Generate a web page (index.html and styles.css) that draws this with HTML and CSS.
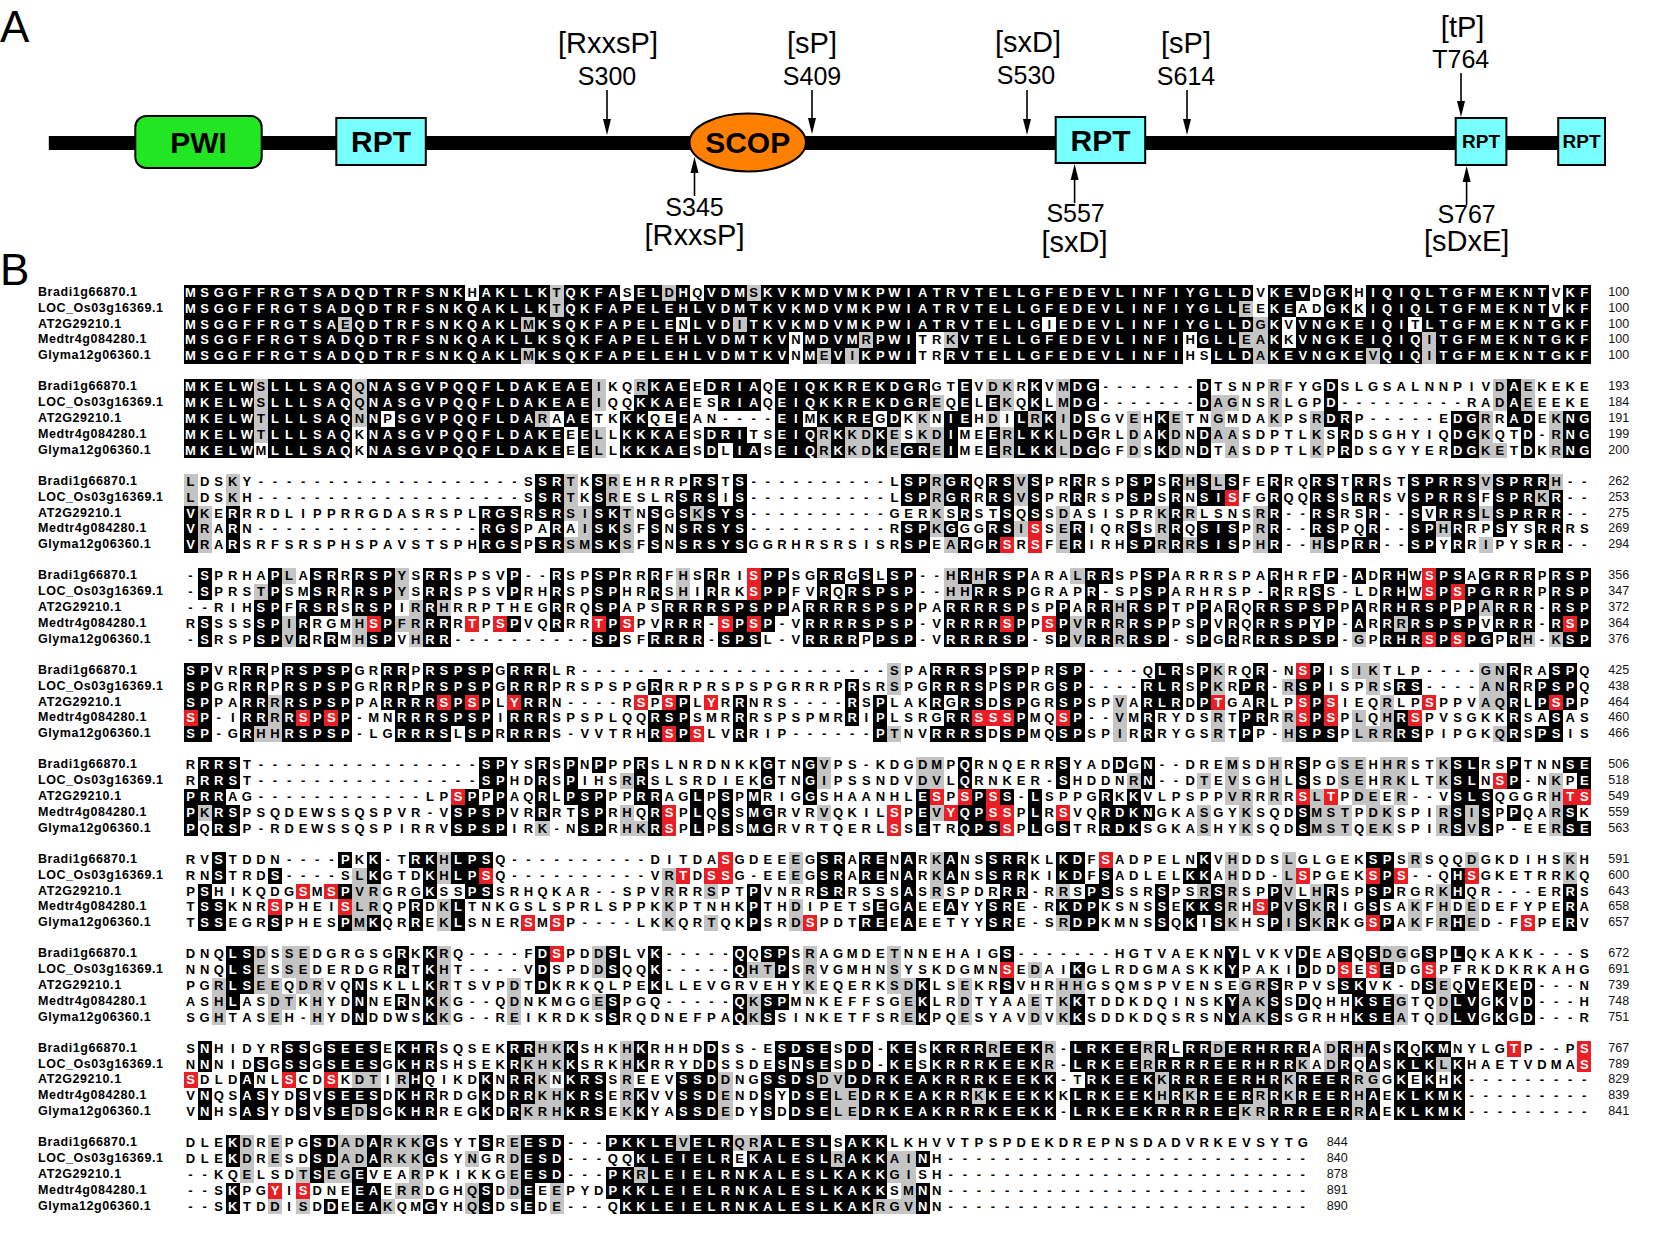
FILE: index.html
```html
<!DOCTYPE html>
<html lang="en">
<head>
<meta charset="utf-8">
<title>Protein domain diagram and alignment</title>
<link rel="stylesheet" href="styles.css">
</head>
<body>
<div class="page">
  <svg class="diagram" width="1654" height="248" viewBox="0 0 1654 248">
    <text class="plabel" x="0" y="42">A</text>
    <rect class="bar" x="48.8" y="136" width="1556" height="14"/>
    <rect class="pwi" x="135.3" y="116" width="126.4" height="52" rx="11"/>
    <text class="dom" x="198.5" y="153">PWI</text>
    <rect class="rpt" x="336.3" y="118" width="89.5" height="47"/>
    <text class="dom" x="381.1" y="152">RPT</text>
    <ellipse class="scop" cx="747.7" cy="142.5" rx="58.2" ry="29"/>
    <text class="dom" x="747.7" y="153">SCOP</text>
    <rect class="rpt" x="1055.7" y="117" width="89.5" height="46"/>
    <text class="dom" x="1100.5" y="151">RPT</text>
    <rect class="rpt" x="1455.7" y="118" width="50.7" height="47"/>
    <text class="dom-s" x="1481.1" y="148">RPT</text>
    <rect class="rpt" x="1558.2" y="118" width="46.8" height="47"/>
    <text class="dom-s" x="1581.6" y="148">RPT</text>

    <line class="arrow" x1="607" y1="90" x2="607" y2="122"/>
    <polygon class="head" points="603,119 611,119 607,135"/>
    <line class="arrow" x1="812" y1="90" x2="812" y2="121"/>
    <polygon class="head" points="808,118 816,118 812,134"/>
    <line class="arrow" x1="1027" y1="90" x2="1027" y2="122"/>
    <polygon class="head" points="1023,119 1031,119 1027,135"/>
    <line class="arrow" x1="1187" y1="90" x2="1187" y2="122"/>
    <polygon class="head" points="1183,119 1191,119 1187,135"/>
    <line class="arrow" x1="1461" y1="73" x2="1461" y2="104"/>
    <polygon class="head" points="1457,101 1465,101 1461,117"/>

    <line class="arrow" x1="694.5" y1="170" x2="694.5" y2="196"/>
    <polygon class="head" points="690.5,173 698.5,173 694.5,157"/>
    <line class="arrow" x1="1074.6" y1="177" x2="1074.6" y2="203"/>
    <polygon class="head" points="1070.6,180 1078.6,180 1074.6,164"/>
    <line class="arrow" x1="1466.6" y1="179" x2="1466.6" y2="205"/>
    <polygon class="head" points="1462.6,182 1470.6,182 1466.6,166"/>

    <text class="motif" x="608" y="53">[RxxsP]</text>
    <text class="site" x="607" y="85">S300</text>
    <text class="motif" x="812" y="53">[sP]</text>
    <text class="site" x="812" y="85">S409</text>
    <text class="motif" x="1028" y="52">[sxD]</text>
    <text class="site" x="1026" y="84">S530</text>
    <text class="motif" x="1186" y="53">[sP]</text>
    <text class="site" x="1186" y="85">S614</text>
    <text class="motif" x="1462.6" y="37">[tP]</text>
    <text class="site" x="1460.7" y="68">T764</text>

    <text class="site" x="694.5" y="216">S345</text>
    <text class="motif" x="694.5" y="245">[RxxsP]</text>
    <text class="site" x="1075.6" y="222">S557</text>
    <text class="motif" x="1074.6" y="252">[sxD]</text>
    <text class="site" x="1466.6" y="223">S767</text>
    <text class="motif" x="1466.6" y="251">[sDxE]</text>
  </svg>

  <section class="panel-b">
    <div class="label-b">B</div>
    <div class="alignment" id="alignment"></div>
  </section>
</div>
<script src="script.js"></script>
</body>
</html>
```

FILE: styles.css
```css
html, body {
  margin: 0;
  padding: 0;
  background: #ffffff;
}
body {
  font-family: "Liberation Sans", Arial, sans-serif;
  color: #000;
}
.page {
  width: 1654px;
  height: 1243px;
  overflow: hidden;
  position: relative;
}
.diagram {
  display: block;
  overflow: visible;
}
.plabel {
  font-family: "Liberation Sans", Arial, sans-serif;
  font-size: 44px;
  fill: #000;
}
.bar {
  fill: #000;
}
.pwi {
  fill: #22e622;
  stroke: #000;
  stroke-width: 2;
}
.rpt {
  fill: #78ffff;
  stroke: #000;
  stroke-width: 2;
}
.scop {
  fill: #ff8000;
  stroke: #000;
  stroke-width: 2;
}
.dom {
  font-family: "Liberation Sans", Arial, sans-serif;
  font-weight: bold;
  font-size: 30px;
  text-anchor: middle;
  fill: #000;
}
.dom-s {
  font-family: "Liberation Sans", Arial, sans-serif;
  font-weight: bold;
  font-size: 19px;
  text-anchor: middle;
  fill: #000;
}
.arrow {
  stroke: #000;
  stroke-width: 1.6;
}
.head {
  fill: #000;
}
.motif {
  font-family: "Liberation Sans", Arial, sans-serif;
  font-size: 29px;
  text-anchor: middle;
  fill: #000;
}
.site {
  font-family: "Liberation Sans", Arial, sans-serif;
  font-size: 25px;
  text-anchor: middle;
  fill: #000;
}

.panel-b {
  display: block;
}
.label-b {
  height: 37px;
  font-size: 44px;
  line-height: 44px;
}
.alignment {
  padding-left: 38px;
}
.block {
  margin-bottom: 15.5px;
}
.row {
  display: flex;
  height: 15.8px;
}
.name {
  width: 145.5px;
  flex: none;
  font-weight: bold;
  font-size: 12.5px;
  letter-spacing: 0.55px;
  line-height: 15.8px;
  white-space: nowrap;
}
.seq {
  display: flex;
  flex: none;
}
.c {
  width: 14.08px;
  flex: none;
  text-align: center;
  font-weight: bold;
  font-size: 13px;
  line-height: 15.8px;
}
.c.b {
  background: #000;
  color: #fff;
}
.c.g {
  background: #c4c4c4;
  color: #000;
}
.c.r {
  background: #ea1f25;
  color: #fff;
}
.num {
  margin-left: 17px;
  font-size: 12.5px;
  line-height: 15.8px;
  color: #111;
}
```

FILE: script.js
```js
(function () {
  var names = ['Bradi1g66870.1', 'LOC_Os03g16369.1', 'AT2G29210.1', 'Medtr4g084280.1', 'Glyma12g06360.1'];
  function d(n) { return new Array(n + 1).join('-'); }
  var blocks = [
    { end: [100, 100, 100, 100, 100], seq: [
      'MSGGFFRGTSADQDTRFSNKHAKLLKTQKFASELDHQVDMSKVKMDVMKPWIATRVTELLGFEDEVLINFIYGLLDVKEVDGKHIQIQLTGFMEKNTVKF',
      'MSGGFFRGTSADQDTRFSNKQAKLLKTQKFAPELEHLVDMTKVKMDVMKPWIATRVTELLGFEDEVLINFIYGLLEEKEADGKKIQIQLTGFMEKNTVKF',
      'MSGGFFRGTSAEQDTRFSNKQAKLMKSQKFAPELENLVDITKVKMDVMKPWIATRVTELLGIEDEVLINFIYGLLDGKVVNGKEIQITLTGFMEKNTGKF',
      'MSGGFFRGTSADQDTRFSNKQAKLLKSQKFAPELEHLVDMTKVNMDVMRPWITRKVTELLGFEDEVLINFIHGLLEAKKVNGKEIQIQITGFMEKNTGKF',
      'MSGGFFRGTSADQDTRFSNKQAKLMKSQKFAPELEHLVDMTKVNMEVIKPWITRRVTELLGFEDEVLINFIHSLLDAKEVNGKEVQIQITGFMEKNTGKF'] },
    { end: [193, 184, 191, 199, 200], seq: [
      'MKELWSLLLSAQQNASGVPQQFLDAKEAEIKQRKAEEDRIAQEIQKKREKDGRGTEVDKRKVMDG-------DTSNPRFYGDSLGSALNNPIVDAEKEKE',
      'MKELWSLLLSAQQNASGVPQQFLDAKEAEIQQKKAEESRIAQEIQKKREKDGREQELEKQKLMDG-------DAGNSRLGPD---------RADAEEEKE',
      'MKELWTLLLSAQNNPSGVPQQFLDARAAETKKKQEEAN----EIMKKREGDKKNIEHDILRKIDSGVEHKETNGMDAKPSRDRP-----EDGRRADEKNG',
      'MKELWTLLLSAQKNASGVPQQFLDAKEEELLKKKAESDRITSEIQRKKDKESKDIMEERLKKLDGRLDAKDNDAASDPTLKSRDSGHYIQDGKQTD-RNG',
      'MKELWMLLLSAQKNASGVPQQFLDAKEEELLKKKAESDLIASEIQRKKDKEGREIMEERLKKLDGGFDSKDNDTASDPTLKPRDSGYYERDGKETDKRNG'] },
    { end: [262, 253, 275, 269, 294], seq: [
      'LDSKY' + d(19) + 'SSRTKSREHRRPRSTS' + d(10) + 'LSPRGRQRSVSPRRRSPSPSRHSLSFERRQRSTRRSTSPRRSVSPRRH--',
      'LDSKH' + d(19) + 'SSRTKSRESLRSRSIS' + d(10) + 'LSPRGRRRSVSPRRRSPSPSRNSIsFGRQQRSSRRSVSPRRSFSPRKR--',
      'VKERRRDLIPPRRGDASRSPLRGSRSRSISKTNSGSKSYS' + d(10) + 'GERKSRSTSQSSDASISPRKRRLSNSRR--RSRSR--SVRRSLSPRRR--',
      'VRARN' + d(16) + 'RGSPARAISKSFSNSRSYS' + d(10) + 'RSPKGGGRSIsSERIQRSSRRQSISPRR--RSPQR--SPHRRPSYSRRRS',
      'VRARSRFSRSPHSPAVSTSPHRGSPSRSMSKSFSNSRSYSGGRHRS' + 'RSISRSPEARGRsRsFERIRHSPRRRSISPHR--HSPRR--SPYRRIPYSRR--'] },
    { end: [356, 347, 372, 364, 376], seq: [
      '-SPRHAPLASRRRSPYSRRSPSVP--RSPSPRRRFHSRRIsPPSGR' + 'RGSLSP--HRHRSPARALRRSPSPARRRSPARHRFP-ADRHWsPSAGRRRPRSP',
      '-SPRSTPSMSRRRSPYSRRSPSVPRHRSPSPHRRSHIRRKsPPFVR' + 'QRSPSP--HHRRSPGRAPR-SPSPARHRSP-RRRSS-LDRHWsPsPGRRRPRSP',
      '--RIHSPFRSRSRSPIRRHRRPTHEGRRQSPAPSRRRRSPSPPARR' + 'RRSPSPPARRRRSPSPPARRHRSPTPPARQRRSPSPPARRHRSPPPARRR-RSP',
      'RSSSSSPIRRGMHsPFRRRRtPsPVQRRRtPsPVRRR-sPsP-VRR' + 'RRSPSP-VRRRRsPPsPVRRRRSPPSPVRQRRSPYP-ARRRRSPSPVRRR-RsP',
      '-SRSPSPVRRRMHSPVHRR' + d(10) + 'SPSFRRRR-SPSL-VRR' + 'RRPPSP-VRRRRSP-SPVRRRRSP-SPGRRRRSPSP-GPRHRsPsPGPRH-KSP'] },
    { end: [425, 438, 464, 460, 466], seq: [
      'SPVRRRPRSPSPGRRRPRSPSPGRRRLR' + d(22) + 'SPARRRSPSPPRSP----QLRSPKRQR-NsPISIKTLP----GNRRASPQ',
      'SPGRRRPRSPSPGRRRPRSPSPGRRRPRSPSPGRRRPRSPSPGRRR' + 'PRSRSPGRRRSPSPRGSP----RLRSPKRPR-RSPISPRSRS----ANRRPSPQ',
      'SPPARRRRSPSPPARRRRsPsPLyRRN----RsPsPLyRRNRS---' + '-RSPLAKRGRSDSPGRSPSPVARLRDPtGARLPsPsIEQRLPsPPVAQRLPsPP',
      'sP-IRRRRsPsP-MNRRRSPSPIRRRSPSPLQQRSPSMRRRSPSPM' + 'RRIPLSRGRRsssPMQsP--VMRRYDSRTPRRRsPsPLQHRsPVSGKKRSASAS',
      'SP-GRHHRSPSP-LGRRRSLSPRRRRS-VVTRHRsPsLVRRIP---' + '---PTNVRRRSDSPMQSPSPIRRRYGSRTPP-HSPSPLRRRSPIPGKQRSPSIS'] },
    { end: [506, 518, 549, 559, 563], seq: [
      'RRRST' + d(16) + 'SPYSRSPNPPPRSLNRDNKKGTNGV' + 'PS-KDGDMPQRNQERRSYADDGN--DREMSDHRSPGSEHHRSTKSLRSPTNNSE',
      'RRRST' + d(16) + 'SPHDRSPIHSRRSLSRDIEKGTNGI' + 'PSSNDVDVLQRNKER-SHDDNRN--DTEVSGHLSSDSEHRKLTKSLNsP-NKPE',
      'PRRAG' + d(12) + 'LPsPPPAQRLPSPPPRRAGLPSPMRIGGS' + 'HAANHLEsPsPsS-LSPPGRKKVLPSPPVRRRRsLtPDEER--VSLSQGGRHts',
      'PKRSPSQDEWSSQSPVR-VSPSPVRRRTSPRHQRsPLQSSMGRVRV' + 'QKILsPEVyQPssPLRsVQRDKNGKASGYKSQDSMSTPDKSPIRSISPPQARSK',
      'PQRSP-RDEWSSQSPIRRVSPSPIRK-NSPRHKRsPLPSSMGRVRT' + 'QERLsSETRQPSsPLGSTRRDKSGKASHYKSQDSMSTQEKSPIRSVSP-EERSE'] },
    { end: [591, 600, 643, 658, 657], seq: [
      'RVSTDDN----PKK-TRKHLPSQ' + d(10) + 'DITDAsGDEEEGS' + 'RARENARKANSSRRKLKDFsADPELNKVHDDSLGLGEKSPSRSQQDGKDIHSKH',
      'RNSTRDS----SLKGTDKHLPsQ' + d(10) + 'VRtDssG-EEEGS' + 'RARENARKANSSRRKIKDFSADLELKKAHDD-LsPGEKsPs--QHsGKETRRKQ',
      'PSHIKQDGsMsPVRGRGKSSPSSRHQKAR--SPVRRRSPTPVNRRS' + 'RRSSSASRSPDRRR-RRSPSSSRSPSRSRSPPVLHRSPSPRGRKHQR---ERRS',
      'TSSKNRsPHEIsLRQPRDKLTNKGSLSPRLSPPKKPTNHKPTHDIP' + 'ETSEGAEEAYYSRE-RKDPKSNSSEKKSRHsPVSKRIGSSAKFHDEDEFYPERA',
      'TSSEGRSPHESPMKQRREKLSNERsMsP----LKKQRTQKPSRDsP' + 'DTREEAEETYYSRE-SRDPKMNSSQKISKHSPISKRKGsPAKFRHED-FsPERV'] },
    { end: [672, 691, 739, 748, 751], seq: [
      'DNQLSDSSEDGRGSGRKKRQ----FDsPDDSLVK-----QQSPSRA' + 'GMDETNNEHAIGS-------HGTVAEKNYLVKVDEASQSDGGSPLQKAKK---S',
      'NNQLSESSEDERDGRRTKHT----VDSPDDSQQK-----QHTPSRV' + 'GMHNSYSKDGMNsEDAIKGLRDGMASKKYPAKIDDDsEsEDGsPFRKDKRKAHG',
      'PGRLSEEQDRVQNSKLLKRTSVPDTDKRKQLPEKLLEVGRVEHYKE' + 'QERKSDKLSEKRSVHRHHGSQMSPVENSEGRSRPVSSKVK-DSEQVEKED---N',
      'ASHLASDTKHYDNNERNKKG--QDNKMGGESPGQ-----QKSPMNK' + 'EFFSGEKLRDTYAAETKKTDDKDQINSKYAKSSDQHHKSEGTQDLVGKVD---H',
      'SGHTASEH-HYDNDDWSKKG--REIKRDKSSRQDNEFPAQKSSINK' + 'ETFSREKPQESYAVDVKKSDDKDQSRSNYAKSSGRHHKSEATQDLVGKGD---R'] },
    { end: [767, 789, 829, 839, 841], seq: [
      'SNHIDYRSSGSEESEKHRSQSEKRRHKKSHKHKRHHDDSS-ESDSE' + 'SDD-KESKRRRREEKR-LRKEERRLRRDERHRRRADRHASKQKMNYLGtP--Ps',
      'NNNIDSGSSGSEESGKHRSHSEKRKHKKSRKHKRRYDDSSDESNSE' + 'SDD-KESKRRRKEEKR-LRKEERRRRREERHRRKADRQASKLKLKHAETVDMAs',
      'sDLDANLsCDsKDTIRHQIKDKNRRKNKRSSREEVSSDDNGSSDSD' + 'VDDRKEAKRRRKEEKK-TRKEEKKRRREERHRKREERRGGKEKHK' + d(9),
      'VNQSASYDSVSEESDKHRRDGKDRRKHKRSERKVVSSDENDSYDSE' + 'LEDRKEAKRRKKEEKKKLRKEEKHRKREERRRKREERHAEKLKMK' + d(9),
      'VNHSASYDSVSEDSGKHRREGKDRKRHKRSEKKYASSDEDYSDDSE' + 'LEDRKEAKRRRKEEKK-LRKEEKRRRREEKRRRREERRAEKLKMK' + d(9)] },
    { end: [844, 840, 878, 891, 890], seq: [
      'DLEKDREPGSDADARKKGSYTSREESD---PKKLEVELRQRALESL' + 'SAKKLKHVVTPSPDEKDREPNSDADVRKEVSYTG',
      'DLEKDRESDSDADARKKGSYNGRDESD---QQKLEIELREKALESL' + 'RAKKAINH' + d(26),
      '--KQELSDTSEGEVEARPKIKKGEESD---PKRLEIELRNKALESL' + 'KAKKGISH' + d(26),
      '--SKPGyIsDNEEAERRDGHQSDDEEEPYDPKKLEIELRNKALESL' + 'KAKKSMNN' + d(26),
      '--SKTDDISDDEEAKQMGYHQSDSEDE---QKKLEIELRNKALESL' + 'KAKRGVNN' + d(26)] }
  ];

  var groups = ['ILVM', 'FYW', 'KRH', 'DE', 'ST', 'NQ', 'AG'];
  function gid(c) {
    for (var i = 0; i < groups.length; i++) {
      if (groups[i].indexOf(c) >= 0) return i;
    }
    return -1;
  }

  var root = document.getElementById('alignment');
  blocks.forEach(function (b) {
    var len = b.seq[0].length;
    var cls = b.seq.map(function () { return []; });
    for (var i = 0; i < len; i++) {
      var col = b.seq.map(function (s) { return (s[i] || '-').toUpperCase(); });
      var cnt = {};
      col.forEach(function (c) { if (c !== '-') cnt[c] = (cnt[c] || 0) + 1; });
      var cons = null, max = 0;
      Object.keys(cnt).forEach(function (c) { if (cnt[c] > max) { max = cnt[c]; cons = c; } });
      var gcons = -1;
      if (max < 3) {
        cons = null;
        var gc = {};
        col.forEach(function (c) { var g = gid(c); if (g >= 0) gc[g] = (gc[g] || 0) + 1; });
        Object.keys(gc).forEach(function (g) { if (gc[g] >= 3) gcons = +g; });
      }
      col.forEach(function (c, r) {
        var k = 'w';
        if (c !== '-') {
          if (cons && c === cons) k = 'b';
          else if (cons && gid(c) >= 0 && gid(c) === gid(cons)) k = 'g';
          else if (!cons && gcons >= 0 && gid(c) === gcons) k = 'g';
        }
        if (b.seq[r][i] && b.seq[r][i] !== c) k = 'r';
        cls[r].push(k);
      });
    }
    var blk = document.createElement('div');
    blk.className = 'block';
    b.seq.forEach(function (s, r) {
      var row = document.createElement('div');
      row.className = 'row';
      var nm = document.createElement('span');
      nm.className = 'name';
      nm.textContent = names[r];
      row.appendChild(nm);
      var sq = document.createElement('div');
      sq.className = 'seq';
      for (var i = 0; i < s.length; i++) {
        var c = document.createElement('span');
        c.className = 'c ' + cls[r][i];
        c.textContent = s[i].toUpperCase();
        sq.appendChild(c);
      }
      row.appendChild(sq);
      var num = document.createElement('span');
      num.className = 'num';
      num.textContent = b.end[r];
      row.appendChild(num);
      blk.appendChild(row);
    });
    root.appendChild(blk);
  });
})();
```
